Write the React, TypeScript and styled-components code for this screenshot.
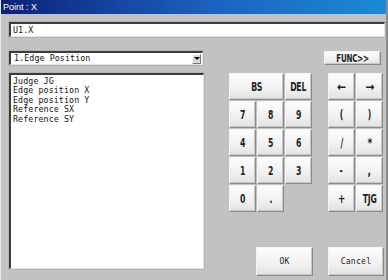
import React from "react";
import styled, { createGlobalStyle } from "styled-components";

const Global = createGlobalStyle`
  html, body { margin: 0; padding: 0; background: #c0c0c0; }
  * { box-sizing: border-box; }
`;

const Window = styled.div`
  width: 388px;
  height: 280px;
  background: #c2c2c2;
  display: flex;
  flex-direction: column;
  border-left: 1px solid #e8e8e8;
  border-right: 2px solid #8c8c8c;
  overflow: hidden;
`;

const TitleBar = styled.div`
  height: 14px;
  flex: none;
  background: linear-gradient(90deg, #0c2278 0%, #1c62c0 55%, #1a8ad6 100%);
  color: #fff;
  font: 9px "Liberation Sans", Arial, sans-serif;
  line-height: 14px;
  padding-left: 2px;
  white-space: pre;
`;

const Content = styled.div`
  flex: 1;
  display: flex;
  flex-direction: column;
  padding: 8px 2px 0 8px;
`;

const Sunken = styled.div`
  background: #fff;
  border-top: 2px solid #3c3c3c;
  border-left: 2px solid #3c3c3c;
  border-right: 1px solid #e6e6e6;
  border-bottom: 1px solid #e6e6e6;
  box-shadow: 0 0 0 0.5px #a0a0a0;
  font: 8.3px "DejaVu Sans Mono", "Liberation Mono", monospace;
  letter-spacing: 0.1px;
  color: #111;
`;

const TextInput = styled(Sunken)`
  height: 15px;
  width: 376px;
  padding: 1px 0 0 2px;
  line-height: 11px;
`;

const Row = styled.div<{ $top: number }>`
  display: flex;
  align-items: flex-start;
  margin-top: ${(p) => p.$top}px;
`;

const Select = styled(Sunken)`
  width: 194px;
  height: 14px;
  display: flex;
  align-items: center;
  padding-left: 3px;
  line-height: 11px;
`;

const SelectText = styled.span`
  flex: 1;
`;

const ArrowBox = styled.div`
  width: 9px;
  height: 10px;
  margin-right: 1px;
  background: #d8d8d8;
  border-top: 1px solid #fff;
  border-left: 1px solid #fff;
  border-right: 1px solid #777;
  border-bottom: 1px solid #777;
  display: flex;
  align-items: center;
  justify-content: center;
`;

const Tri = styled.div`
  width: 0;
  height: 0;
  border-left: 3px solid transparent;
  border-right: 3px solid transparent;
  border-top: 3px solid #000;
`;

const Btn = styled.button<{ $w?: number; $h?: number }>`
  width: ${(p) => p.$w ?? 27}px;
  height: ${(p) => p.$h ?? 27}px;
  margin: 0;
  padding: 0;
  background: linear-gradient(180deg, #fdfdfd 0%, #f0f0f0 60%, #e2e2e2 100%);
  border-top: 1px solid #f4f4f4;
  border-left: 1px solid #f4f4f4;
  border-right: 1px solid #8a8a8a;
  border-bottom: 1px solid #8a8a8a;
  box-shadow: inset -1px -1px 0 #c8c8c8;
  color: #222;
  display: flex;
  align-items: center;
  justify-content: center;
  overflow: hidden;
`;

const Label = styled.span<{ $size?: number; $scale?: number }>`
  display: inline-block;
  font: bold ${(p) => p.$size ?? 12}px "DejaVu Sans Condensed", "DejaVu Sans", sans-serif;
  transform: scaleX(${(p) => p.$scale ?? 0.72});
  white-space: nowrap;
  letter-spacing: -0.3px;
  color: #1e1e1e;
`;

const SmallLabel = styled.span`
  font: 8px "DejaVu Sans Mono", "Liberation Mono", monospace;
  letter-spacing: 0.3px;
  color: #222;
`;

const FuncBtn = styled(Btn)`
  margin-left: auto;
  margin-right: 3px;
`;

const Main = styled.div`
  display: flex;
  margin-top: 8px;
  flex: 1;
`;

const List = styled(Sunken)`
  width: 195px;
  height: 196px;
  padding: 2px 0 0 2px;
  line-height: 9.4px;
`;

const Right = styled.div`
  flex: 1;
  display: flex;
  flex-direction: column;
  padding-left: 25px;
  padding-bottom: 4px;
`;

const Pads = styled.div`
  display: flex;
  gap: 16px;
`;

const Grid = styled.div<{ $cols: number }>`
  display: grid;
  grid-template-columns: repeat(${(p) => p.$cols}, 27px);
  grid-auto-rows: 27px;
  gap: 1px;
`;

const Span2 = styled(Btn)`
  grid-column: span 2;
  width: 55px;
`;

const Actions = styled.div`
  margin-top: auto;
  display: flex;
  gap: 15px;
  padding-left: 27px;
`;

const keysLeft = ["7", "8", "9", "4", "5", "6", "1", "2", "3", "0", "."];
const keysRight: [string, number, number][] = [
  ["←", 12, 1],
  ["→", 12, 1],
  ["(", 12, 0.72],
  [")", 12, 0.72],
  ["/", 12, 0.72],
  ["*", 13, 0.8],
  ["-", 12, 0.72],
  [",", 13, 0.8],
  ["+", 12, 0.8],
  ["TJG", 12, 0.72],
];

export default function App() {
  return (
    <>
      <Global />
      <Window>
        <TitleBar>Point : X</TitleBar>
        <Content>
          <TextInput>U1.X</TextInput>
          <Row $top={14}>
            <Select>
              <SelectText>1.Edge Position</SelectText>
              <ArrowBox>
                <Tri />
              </ArrowBox>
            </Select>
            <FuncBtn $w={57} $h={14}>
              <Label $size={11}>FUNC&gt;&gt;</Label>
            </FuncBtn>
          </Row>
          <Main>
            <List>
              <div>Judge JG</div>
              <div>Edge position X</div>
              <div>Edge position Y</div>
              <div>Reference SX</div>
              <div>Reference SY</div>
            </List>
            <Right>
              <Pads>
                <Grid $cols={3}>
                  <Span2>
                    <Label>BS</Label>
                  </Span2>
                  <Btn>
                    <Label>DEL</Label>
                  </Btn>
                  {keysLeft.map((k) => (
                    <Btn key={k}>
                      <Label>{k}</Label>
                    </Btn>
                  ))}
                </Grid>
                <Grid $cols={2}>
                  {keysRight.map(([k, s, sc]) => (
                    <Btn key={k}>
                      <Label $size={s} $scale={sc}>
                        {k}
                      </Label>
                    </Btn>
                  ))}
                </Grid>
              </Pads>
              <Actions>
                <Btn $w={57} $h={29}>
                  <SmallLabel>OK</SmallLabel>
                </Btn>
                <Btn $w={56} $h={29}>
                  <SmallLabel>Cancel</SmallLabel>
                </Btn>
              </Actions>
            </Right>
          </Main>
        </Content>
      </Window>
    </>
  );
}
